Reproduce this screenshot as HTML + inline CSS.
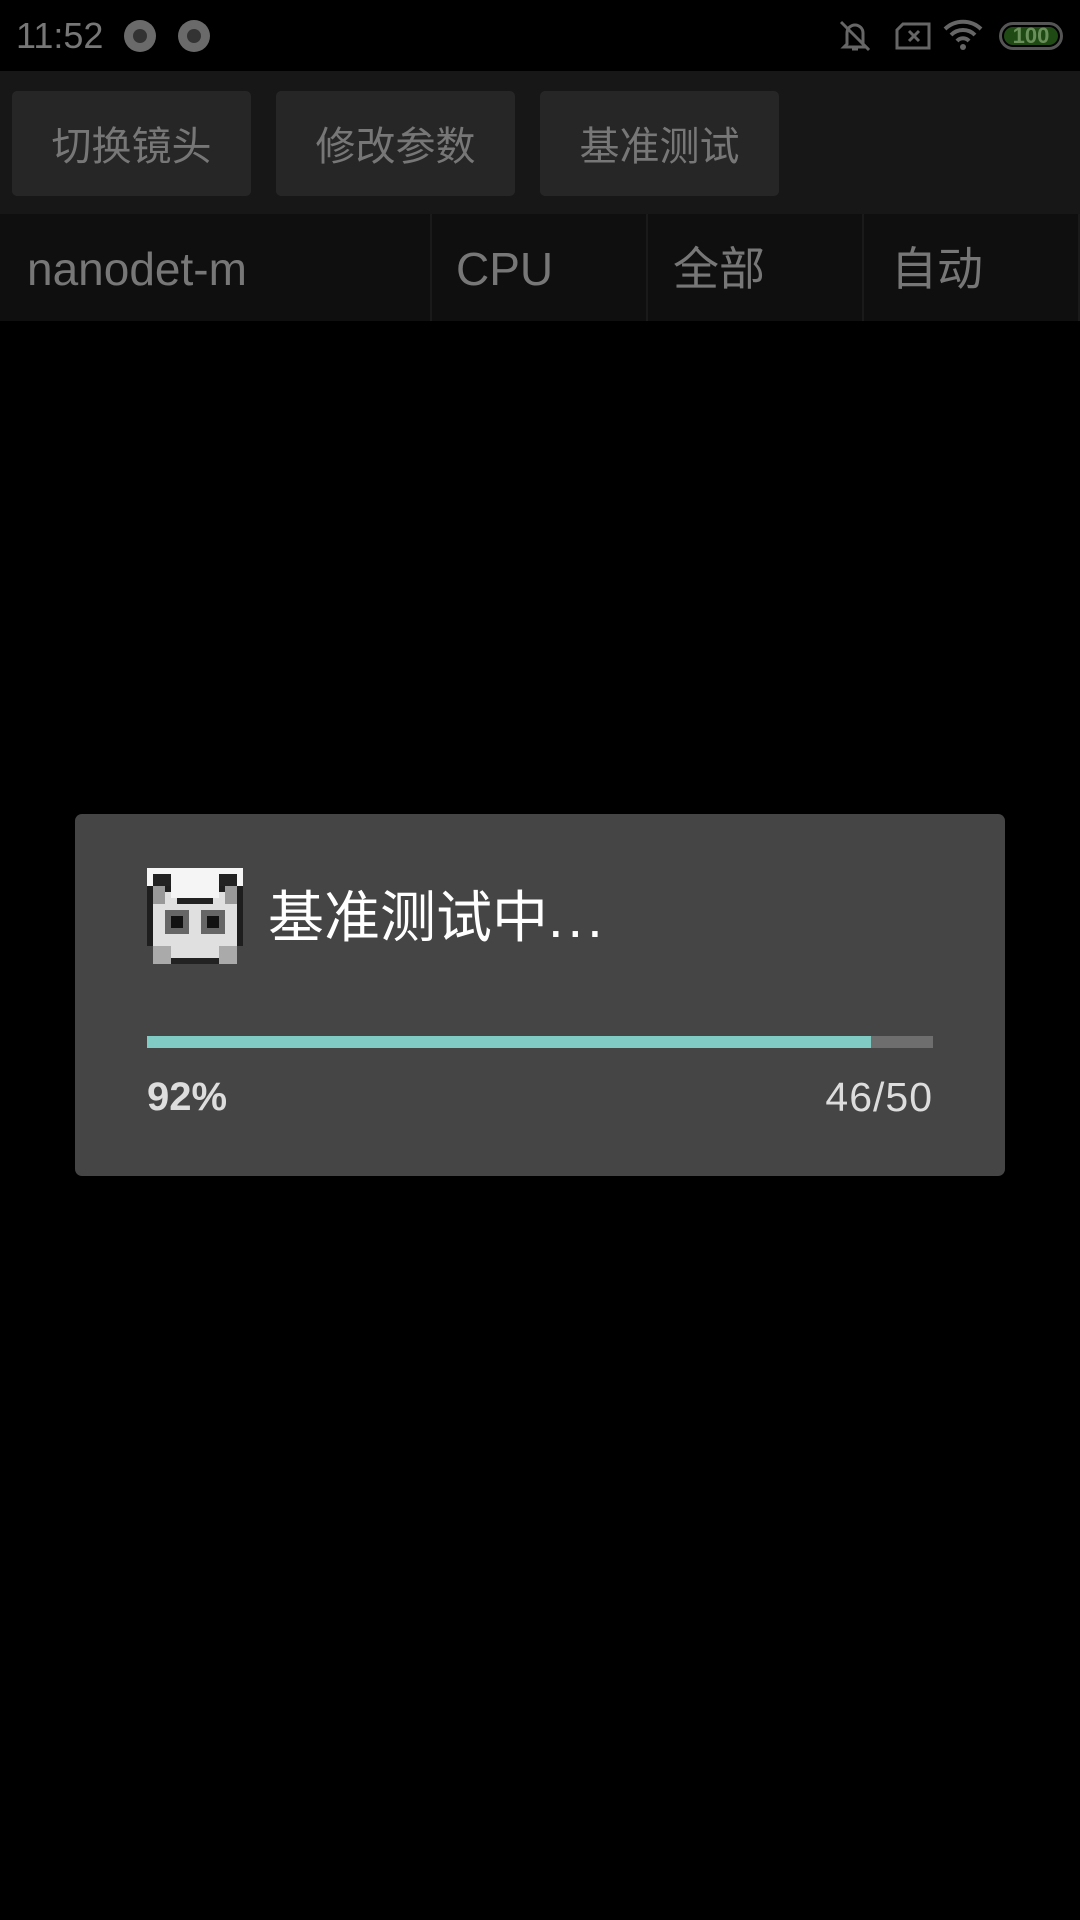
<!DOCTYPE html>
<html><head><meta charset="utf-8"><style>
*{margin:0;padding:0;box-sizing:border-box}
body{width:1080px;height:1920px;background:#000;position:relative;overflow:hidden;font-family:"Liberation Sans","Noto Sans CJK SC",sans-serif}
.a{position:absolute}
.btn{position:absolute;top:91px;height:105px;width:239px;background:#262626;border-radius:5px;color:#777;font-size:40px;line-height:112px;text-align:center}
.cell{position:absolute;top:214px;height:107px;color:#777;font-size:46px;line-height:110px}
.div{position:absolute;top:214px;height:107px;width:2px;background:#1a1a1a}
</style></head><body>
<div class="a" style="left:16px;top:14px;color:#777;font-size:36px;line-height:44px">11:52</div>
<div class="a" style="left:124px;top:20px;width:32px;height:32px;border-radius:50%;background:#6a6a6a"><div class="a" style="left:9px;top:9px;width:14px;height:14px;border-radius:50%;background:#333"></div></div>
<div class="a" style="left:178px;top:20px;width:32px;height:32px;border-radius:50%;background:#6a6a6a"><div class="a" style="left:9px;top:9px;width:14px;height:14px;border-radius:50%;background:#333"></div></div>
<svg class="a" style="left:835px;top:18px" width="40" height="36" viewBox="0 0 40 36" fill="none" stroke="#666" stroke-width="3"><path d="M12 26V15a8 8 0 0 1 16 0v11l3 3H9z"/><path d="M17 31h6"/><path d="M6 4l28 28"/></svg>
<svg class="a" style="left:895px;top:22px" width="36" height="28" viewBox="0 0 36 28" fill="none" stroke="#666" stroke-width="3"><path d="M8 2h26v24H2V8z"/><path d="M14 9l10 10M24 9L14 19"/></svg>
<svg class="a" style="left:943px;top:18px" width="40" height="34" viewBox="0 0 40 34" fill="none" stroke="#666" stroke-width="4"><path d="M2 11a26 26 0 0 1 36 0M8 17a17 17 0 0 1 24 0M14 23a8 8 0 0 1 12 0"/><circle cx="20" cy="29" r="3" fill="#666" stroke="none"/></svg>
<div class="a" style="left:999px;top:22px;width:64px;height:28px;border:3px solid #555;border-radius:14px;padding:2px"><div style="width:100%;height:100%;background:#1f4a14;border-radius:10px;color:#6a8f5a;font-size:22px;font-weight:bold;line-height:18px;text-align:center">100</div></div>
<div class="a" style="left:0;top:71px;width:1080px;height:143px;background:#171717"></div>
<div class="btn" style="left:12px">切换镜头</div>
<div class="btn" style="left:276px">修改参数</div>
<div class="btn" style="left:540px">基准测试</div>
<div class="a" style="left:0;top:214px;width:1080px;height:107px;background:#0f0f0f"></div>
<div class="div" style="left:430px"></div><div class="div" style="left:646px"></div><div class="div" style="left:862px"></div><div class="div" style="left:1078px"></div>
<div class="cell" style="left:27px">nanodet-m</div>
<div class="cell" style="left:456px">CPU</div>
<div class="cell" style="left:673px">全部</div>
<div class="cell" style="left:891px">自动</div>
<div class="a" style="left:75px;top:814px;width:930px;height:362px;background:#454545;border-radius:7px"></div>
<svg class="a" style="left:147px;top:868px" width="96" height="96" viewBox="0 0 16 16" shape-rendering="crispEdges">
<rect x="0" y="0" width="16" height="16" fill="#454545"/>
<rect x="0" y="0" width="16" height="3" fill="#f5f5f5"/>
<rect x="1" y="1" width="3" height="2" fill="#222"/><rect x="12" y="1" width="3" height="2" fill="#222"/>
<rect x="0" y="3" width="16" height="10" fill="#1e1e1e"/>
<rect x="1" y="4" width="14" height="9" fill="#e0e0e0"/>
<rect x="4" y="2" width="8" height="3" fill="#f5f5f5"/><rect x="5" y="5" width="6" height="1" fill="#222"/>
<rect x="1" y="3" width="2" height="3" fill="#999"/><rect x="13" y="3" width="2" height="3" fill="#999"/>
<rect x="3" y="7" width="4" height="4" fill="#666"/><rect x="9" y="7" width="4" height="4" fill="#666"/>
<rect x="4" y="8" width="2" height="2" fill="#111"/><rect x="10" y="8" width="2" height="2" fill="#111"/>
<rect x="1" y="13" width="3" height="3" fill="#aaa"/><rect x="12" y="13" width="3" height="3" fill="#aaa"/>
<rect x="4" y="11" width="8" height="5" fill="#e0e0e0"/><rect x="4" y="15" width="8" height="1" fill="#222"/>
</svg>
<div class="a" style="left:268px;top:884px;color:#fff;font-size:56px;line-height:68px">基准测试中<span style="letter-spacing:4px">...</span></div>
<div class="a" style="left:147px;top:1036px;width:786px;height:12px;background:#6e6e6e"></div>
<div class="a" style="left:147px;top:1036px;width:724px;height:12px;background:#80cbc4"></div>
<div class="a" style="left:147px;top:1075px;color:#ddd;font-size:40px;font-weight:bold;line-height:44px">92%</div>
<div class="a" style="right:147px;top:1075px;color:#ddd;font-size:41px;line-height:44px;letter-spacing:1px">46/50</div>
</body></html>
